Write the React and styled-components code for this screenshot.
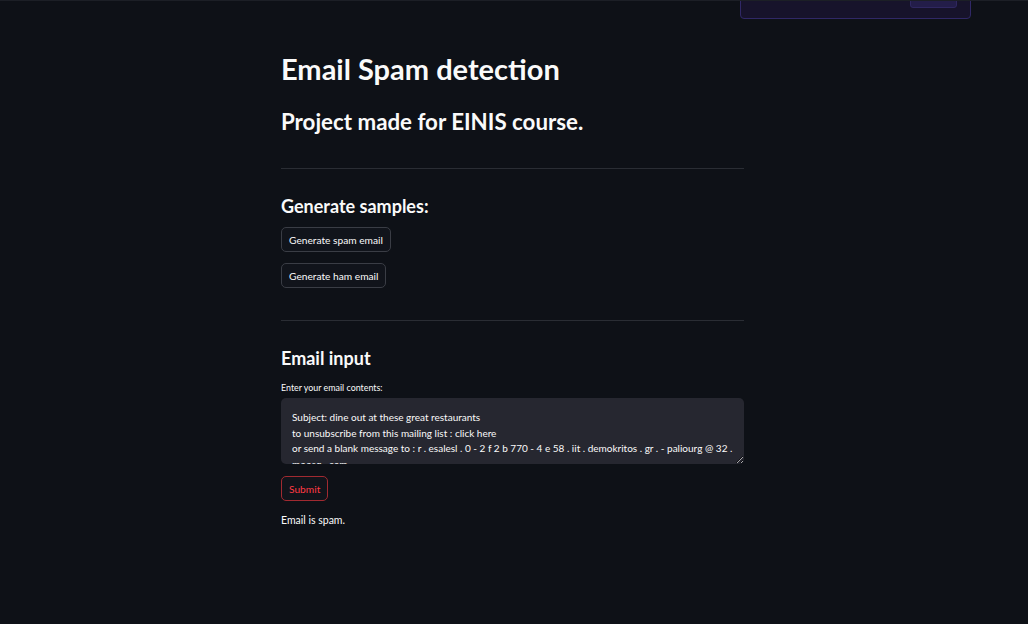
import React, {useState} from "react";
import styled, {createGlobalStyle} from "styled-components";

const sample = `Subject: dine out at these great restaurants
to unsubscribe from this mailing list : click here
or send a blank message to : r . esalesl . 0 - 2 f 2 b 770 - 4 e 58 . iit . demokritos . gr . - paliourg @ 32 . moosq . com`;

const App = () => {
  const [text, setText] = useState(sample);
  return (
    <Page>
      <GlobalStyle />
      <Toast>
        <ToastButton />
      </Toast>
      <Main>
        <Title>Email Spam detection</Title>
        <Subtitle>Project made for EINIS course.</Subtitle>
        <Divider />
        <Section>
          <SectionTitle>Generate samples:</SectionTitle>
          <ButtonStack>
            <Button>Generate spam email</Button>
            <Button>Generate ham email</Button>
          </ButtonStack>
        </Section>
        <Divider />
        <Section>
          <SectionTitle>Email input</SectionTitle>
          <Label>Enter your email contents:</Label>
          <TextArea value={text} onChange={(e) => setText(e.target.value)} />
          <Button $active>Submit</Button>
          <Result>Email is spam.</Result>
        </Section>
      </Main>
    </Page>
  );
};

const GlobalStyle = createGlobalStyle`
  html, body {
    margin: 0;
    padding: 0;
    background: #0e1117;
  }
  * {
    box-sizing: border-box;
  }
`;

const Page = styled.div`
  position: relative;
  width: 1028px;
  height: 624px;
  overflow: hidden;
  padding-right: 3px;
  background: #0e1117;
  color: #fafafa;
  font-family: "Lato", "Noto Sans", sans-serif;
  border-top: 1px solid #1c1f26;
`;

const Toast = styled.div`
  position: absolute;
  top: -12px;
  left: 740px;
  width: 231px;
  height: 30px;
  background: #17132b;
  border: 1px solid #302866;
  border-radius: 4px;
`;

const ToastButton = styled.div`
  position: absolute;
  top: 0;
  right: 13px;
  width: 47px;
  height: 18px;
  background: #231d49;
  border: 1px solid #2f2760;
  border-radius: 3px;
`;

const Main = styled.main`
  width: 463px;
  margin: 0 auto;
  padding-top: 50px;
  display: flex;
  flex-direction: column;
`;

const Title = styled.h1`
  margin: 0;
  font-size: 29px;
  font-weight: 700;
  line-height: 36px;
`;

const Subtitle = styled.h2`
  margin: 20px 0 0;
  font-size: 22.3px;
  font-weight: 700;
  line-height: 30px;
`;

const Divider = styled.hr`
  width: 100%;
  margin: 31px 0 0;
  border: none;
  border-top: 1px solid #2a2d34;
`;

const Section = styled.section`
  display: flex;
  flex-direction: column;
  align-items: flex-start;
  padding: 24px 0 1px;
`;

const SectionTitle = styled.h3`
  margin: 0 0 8px;
  font-size: 18px;
  font-weight: 700;
  line-height: 26px;
`;

const ButtonStack = styled.div`
  display: flex;
  flex-direction: column;
  align-items: flex-start;
  gap: 11px;
`;

const Button = styled.button`
  height: 25px;
  padding: 0 7px;
  font-family: inherit;
  font-size: 10.2px;
  color: ${(p) => (p.$active ? "#ff3a44" : "#fafafa")};
  background: #11141b;
  border: 1px solid ${(p) => (p.$active ? "#a12a31" : "#3a3d45")};
  border-radius: 5px;
  cursor: pointer;
`;

const Label = styled.label`
  font-size: 8.9px;
  line-height: 14px;
  margin: 2px 0 3px;
`;

const TextArea = styled.textarea`
  width: 100%;
  height: 66px;
  margin-bottom: 12px;
  padding: 12px 11px 8px;
  font-family: inherit;
  font-size: 10px;
  line-height: 15.5px;
  color: #fafafa;
  background: #262730;
  border: none;
  border-radius: 5px;
  outline: none;
  resize: vertical;
  overflow: hidden;
`;

const Result = styled.p`
  margin: 11px 0 0;
  font-size: 10.5px;
  line-height: 16px;
`;

export default App;
